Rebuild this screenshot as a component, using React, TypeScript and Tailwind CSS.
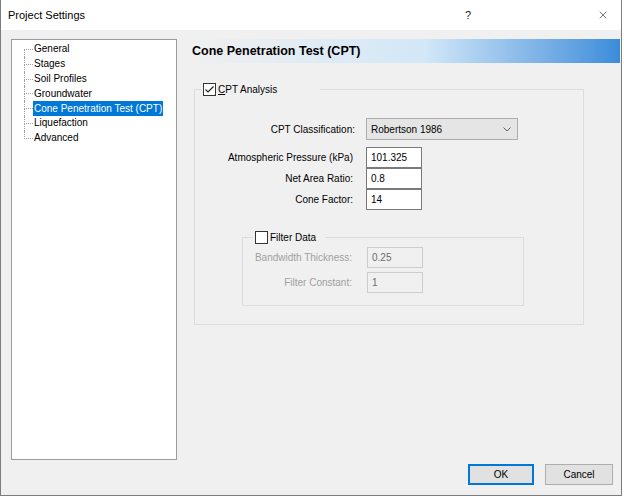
import { X } from "lucide-react";

const treeItems = [
  "General",
  "Stages",
  "Soil Profiles",
  "Groundwater",
  "Cone Penetration Test (CPT)",
  "Liquefaction",
  "Advanced",
];

function Check({ checked }: { checked: boolean }) {
  return (
    <span className="flex h-[13px] w-[13px] shrink-0 items-center justify-center border border-[#333333] bg-white">
      {checked && (
        <svg width="11" height="11" viewBox="0 0 11 11">
          <polyline points="1.5,5.5 4,8 9.5,2.5" fill="none" stroke="#222222" strokeWidth="1.2" />
        </svg>
      )}
    </span>
  );
}

function TextBox({ value, disabled }: { value: string; disabled?: boolean }) {
  return (
    <div
      className={`flex h-[21px] w-[56px] items-center border px-[4px] ${
        disabled ? "border-[#cccccc] bg-[#f0f0f0] text-[#6d6d6d]" : "border-[#7a7a7a] bg-white text-black"
      }`}
    >
      {value}
    </div>
  );
}

export default function App() {
  return (
    <div className="flex h-[496px] w-[622px] flex-col border-b border-l border-r border-[#7d7d7d] bg-[#f0f0f0] font-['Liberation_Sans',Arial,sans-serif] text-[10px] text-black">
      {/* Barra de título */}
      <div className="flex h-[30px] shrink-0 items-center bg-white pl-[7px] pr-[12px]">
        <span className="text-[11px]">Project Settings</span>
        <span className="ml-auto mr-[126px] text-[11px] text-[#222]">?</span>
        <X size={12} strokeWidth={1.2} className="text-[#222]" />
      </div>

      <div className="flex flex-1 flex-col pl-[10px] pr-[1px] pt-[9px]">
        <div className="flex gap-[11px]">
          {/* Árbol de opciones */}
          <div className="h-[421px] w-[166px] border border-[#9a9a9a] bg-white pl-[12px] pt-[2px]">
            {treeItems.map((item, i) => {
              const selected = i === 4;
              const last = i === treeItems.length - 1;
              return (
                <div key={item} className="flex h-[14.8px] items-stretch">
                  <div className="flex w-[9px] flex-col">
                    <div
                      className={`flex-1 border-b border-dotted border-[#a0a0a0] ${i === 0 ? "" : "border-l"}`}
                    />
                    <div className={`flex-1 border-dotted border-[#a0a0a0] ${last ? "" : "border-l"}`} />
                  </div>
                  <span
                    className={`flex items-center px-[1px] leading-none ${
                      selected ? "bg-[#0078d7] text-white" : ""
                    }`}
                  >
                    {item}
                  </span>
                </div>
              );
            })}
          </div>

          {/* Panel derecho */}
          <div className="w-[432px]">
            <div className="flex h-[24px] items-center bg-linear-to-r from-[#f0f0f0] via-[#d2e7f7] via-55% to-[#3a8cd9] pl-[4px] text-[12.5px] font-bold">
              Cone Penetration Test (CPT)
            </div>

            <fieldset className="ml-[6px] mt-[19px] w-[390px] border border-[#dcdcdc] pb-[18px]">
              <legend className="ml-[6px] flex h-[15px] w-[119px] items-center gap-[2px] pl-[2px]">
                <Check checked />
                <span>
                  <u>C</u>PT Analysis
                </span>
              </legend>

              <div className="mt-[21px] flex items-center gap-[11px]">
                <span className="w-[160px] text-right">CPT Classification:</span>
                <div className="flex h-[22px] w-[152px] items-center justify-between border border-[#adadad] bg-[#e5e5e5] pl-[4px] pr-[6px]">
                  <span>Robertson 1986</span>
                  <svg width="8" height="5" viewBox="0 0 8 5">
                    <polyline points="0.5,0.5 4,4 7.5,0.5" fill="none" stroke="#606060" strokeWidth="1" />
                  </svg>
                </div>
              </div>

              <div className="mt-[7px] flex flex-col">
                {[
                  ["Atmospheric Pressure (kPa)", "101.325"],
                  ["Net Area Ratio:", "0.8"],
                  ["Cone Factor:", "14"],
                ].map(([label, value]) => (
                  <div key={label} className="flex items-center gap-[11px]">
                    <span className="w-[160px] pr-[2px] text-right">{label}</span>
                    <TextBox value={value} />
                  </div>
                ))}
              </div>

              <fieldset className="ml-[47px] mt-[20px] w-[282px] border border-[#dcdcdc] pb-[12px]">
                <legend className="ml-[10px] flex h-[15px] w-[72px] items-center gap-[2px] pl-[2px]">
                  <Check checked={false} />
                  <span>Filter Data</span>
                </legend>
                <div className="mt-[2px] flex flex-col gap-[4px]">
                  {[
                    ["Bandwidth Thickness:", "0.25"],
                    ["Filter Constant:", "1"],
                  ].map(([label, value]) => (
                    <div key={label} className="flex items-center gap-[15px]">
                      <span className="w-[109px] text-right text-[#a0a0a0]">{label}</span>
                      <TextBox value={value} disabled />
                    </div>
                  ))}
                </div>
              </fieldset>
            </fieldset>
          </div>
        </div>

        {/* Botones */}
        <div className="mr-[7px] mt-[4px] flex justify-end gap-[11px]">
          <button className="h-[21px] w-[66px] border border-[#0078d7] bg-[#e1e1e1] shadow-[inset_0_0_0_1px_#0078d7]">
            OK
          </button>
          <button className="h-[21px] w-[68px] border border-[#adadad] bg-[#e1e1e1]">Cancel</button>
        </div>
      </div>
    </div>
  );
}
